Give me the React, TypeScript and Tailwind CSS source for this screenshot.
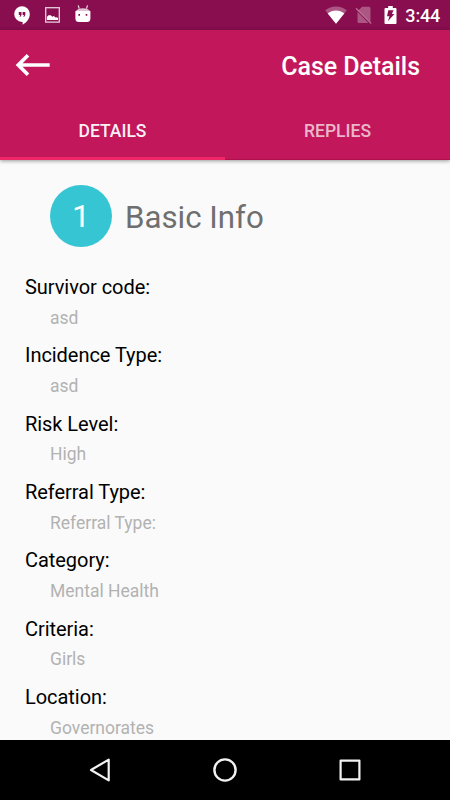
import React, { useState } from 'react';

interface CaseField {
    label: string;
    value: string;
}

const fields: CaseField[] = [
    { label: 'Survivor code:', value: 'asd' },
    { label: 'Incidence Type:', value: 'asd' },
    { label: 'Risk Level:', value: 'High' },
    { label: 'Referral Type:', value: 'Referral Type:' },
    { label: 'Category:', value: 'Mental Health' },
    { label: 'Criteria:', value: 'Girls' },
    { label: 'Location:', value: 'Governorates' },
];

const tabs = ['DETAILS', 'REPLIES'];

const StatusBar: React.FC = () => (
    <div className="h-[30px] shrink-0 bg-[#880e4f] flex items-center justify-between pl-[14px] pr-[10px] text-white">
        <div className="flex items-center">
            {/* Hangouts */}
            <svg width="16" height="20" viewBox="0 0 16 20" className="mt-[1px]">
                <path d="M8 .3a7.800 7.800 0 0 1 7.800 7.800c0 4.700-3.500 8.900-7.200 10.600v-2.800H8A7.800 7.800 0 0 1 8 .3z" fill="#fff" />
                <path d="M4.800 6h2.700v3L6.500 10.800H5.500l.7-1.900H4.800zM8.600 6h2.700v3l-1 1.800h-1l.7-1.900H8.600z" fill="#880e4f" />
            </svg>
            {/* Screenshot */}
            <svg width="15" height="16" viewBox="0 0 15 16" className="ml-[15px]">
                <rect x=".7" y=".7" width="13.600" height="14.400" fill="none" stroke="#fff" strokeOpacity=".8" strokeWidth="1.300" />
                <path d="M2 13v-3.200l1.500-1.500h2.200l1.600 1.500 1.500-.8 1.700 1.500 1.500-.3 1 1V13z" fill="#fff" />
            </svg>
            {/* Android debug head */}
            <svg width="16" height="18" viewBox="0 0 16 18" className="ml-[15px] -mt-[2px]">
                <path d="M3.200.4l1 3.200M12.500.4l-1 3.200" stroke="#fff" strokeOpacity=".85" strokeWidth="1.200" />
                <path d="M.8 6.200C1.800 4.200 4.300 3.200 7.900 3.200s6.100 1 7.100 3z" fill="#fff" fillOpacity=".75" />
                <path d="M.4 6h15v7.500a3.500 3.500 0 0 1-3.500 3.500h-8a3.500 3.500 0 0 1-3.500-3.500z" fill="#fff" />
                <path d="M3.400 9h1.600v1.700H3.400zM10.700 9h1.600v1.700h-1.600z" fill="#880e4f" />
            </svg>
        </div>
        <div className="flex items-center">
            <svg width="22" height="18" viewBox="0 0 22 18">
                <path d="M11 17.700L.2 4.300C3.300 1.700 7 .4 11 .4s7.700 1.300 10.800 3.900z" fill="#fff" fillOpacity=".3" />
                <path d="M11 17.700L2.700 7.400C5 5.500 8 4.500 11 4.500s6 1 8.300 2.900z" fill="#fff" />
            </svg>
            <svg width="18" height="18" viewBox="0 0 18 18" className="ml-[8px]">
                <path d="M3.600 4.300L7.100.8h6.900a1.500 1.500 0 0 1 1.500 1.500v13.400zM2.500 5.800l10.900 11.300H4a1.500 1.500 0 0 1-1.500-1.400z" fill="#fff" fillOpacity=".3" />
                <path d="M1 2.200l15.200 15.300" stroke="#fff" strokeOpacity=".4" strokeWidth="1.300" />
            </svg>
            <svg width="13" height="18" viewBox="0 0 13 18" className="ml-[11px]">
                <path d="M4.200 0h4.600v2H11.500a1 1 0 0 1 1 1v14a1 1 0 0 1-1 1h-10a1 1 0 0 1-1-1V3a1 1 0 0 1 1-1h2.700z" fill="#fff" />
                <path d="M4.300 4.300h5.200L7.900 7.900h2.500L3.900 15.200l1.600-4.900H3z" fill="#880e4f" />
            </svg>
            <span className="ml-[8px] pt-[2px] text-[18px] leading-[20px] font-medium tracking-[-0.2px]">3:44</span>
        </div>
    </div>
);

const NavBar: React.FC = () => (
    <div className="h-[60px] shrink-0 bg-black flex items-center justify-between pl-[88px] pr-[88px]">
        <svg width="24" height="26" viewBox="0 0 24 26" fill="none" stroke="#f2f2f2" strokeWidth="2.200" strokeLinejoin="round">
            <path d="M20.700 2.600v20.800L3 13z" />
        </svg>
        <svg width="26" height="26" viewBox="0 0 26 26" fill="none" stroke="#f2f2f2" strokeWidth="2.400">
            <circle cx="13" cy="13" r="10.600" />
        </svg>
        <svg width="24" height="24" viewBox="0 0 24 24" fill="none" stroke="#f2f2f2" strokeWidth="2.200" strokeLinejoin="round">
            <rect x="2.600" y="2.600" width="18.800" height="18.800" />
        </svg>
    </div>
);

const App: React.FC = () => {
    const [activeTab, setActiveTab] = useState('DETAILS');

    return (
        <div className="w-[450px] h-[800px] flex flex-col overflow-hidden bg-[#fafafa] font-[Roboto,sans-serif]">
            <StatusBar />

            <header className="relative z-10 h-[130px] shrink-0 flex flex-col bg-[#c2185b] text-white shadow-[0_1px_4px_rgba(0,0,0,0.4),inset_0_-1px_0_#b0104c]">
                <div className="h-[70px] flex items-center justify-between pl-[15px] pr-[30px]">
                    <button aria-label="Back">
                        <svg width="36" height="24" viewBox="0 0 36 24" fill="none" stroke="#fff" strokeWidth="3.700">
                            <path d="M34.700 12H4M13 2.300L3.300 12l9.700 9.700" />
                        </svg>
                    </button>
                    <h1 className="text-[25px] leading-[30px] font-medium tracking-[-0.05px] pt-[4px]">Case Details</h1>
                </div>
                <div className="flex-1 flex">
                    {tabs.map(tab => (
                        <button
                            key={tab}
                            onClick={() => setActiveTab(tab)}
                            className={`flex-1 pt-[5px] border-b-[3px] text-[17.5px] font-medium ${activeTab === tab ? 'border-[#ef2769] text-white/95' : 'border-transparent text-white/70'}`}
                        >
                            {tab}
                        </button>
                    ))}
                </div>
            </header>

            <main className="flex-1 overflow-hidden">
                <div className="flex items-center pl-[50px] pt-[25px]">
                    <div className="size-[62px] rounded-full bg-[#36c5d3] flex items-center justify-center text-white text-[32px]">1</div>
                    <h2 className="ml-[13px] text-[31.25px] leading-[38px] pt-[3px] text-[#6f6f6f]">Basic Info</h2>
                </div>
                <dl className="pt-[27px]">
                    {fields.map(field => (
                        <div key={field.label} className="h-[68.35px]">
                            <dt className="pl-[25px] text-[20px] leading-[26px] tracking-[-0.05px] text-black">{field.label}</dt>
                            <dd className="pl-[50px] pt-[6.6px] text-[17.5px] leading-[22px] text-[#b2b2b2]">{field.value}</dd>
                        </div>
                    ))}
                </dl>
            </main>

            <NavBar />
        </div>
    );
};

export default App;
